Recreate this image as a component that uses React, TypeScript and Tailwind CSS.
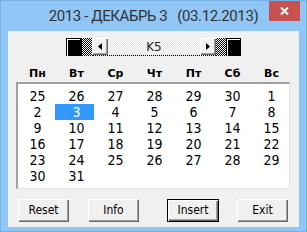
import React from 'react';

const days = ['Пн', 'Вт', 'Ср', 'Чт', 'Пт', 'Сб', 'Вс'];

const weeks = [
  ['25', '26', '27', '28', '29', '30', '1'],
  ['2', '3', '4', '5', '6', '7', '8'],
  ['9', '10', '11', '12', '13', '14', '15'],
  ['16', '17', '18', '19', '20', '21', '22'],
  ['23', '24', '25', '26', '27', '28', '29'],
  ['30', '31', '', '', '', '', ''],
];

function ArrowButton({ dir }: { dir: 'left' | 'right' }) {
  return (
    <div className="w-[16px] h-[17px] bg-[#f0f0f0] flex items-center justify-center shadow-[inset_1px_1px_0_#fff,inset_-1px_-1px_0_#696969,inset_-2px_-2px_0_#a0a0a0]">
      <svg width="4" height="7" viewBox="0 0 4 7">
        {dir === 'left' ? <polygon points="4,0 4,7 0,3.5" fill="#000" /> : <polygon points="0,0 0,7 4,3.5" fill="#000" />}
      </svg>
    </div>
  );
}

function WinButton({ label, focused }: { label: string; focused?: boolean }) {
  return (
    <button
      className={
        'h-[23px] bg-[#f0f0f0] text-[12px] text-black font-["DejaVu_Sans_Condensed",sans-serif] shadow-[inset_1px_1px_0_#fff,inset_-1px_-1px_0_#696969,inset_-2px_-2px_0_#a0a0a0] ' +
        (focused ? 'w-[52px] border border-black' : 'w-[51px]')
      }
    >
      {label}
    </button>
  );
}

export default function App() {
  return (
    <div className="relative w-[307px] h-[232px] bg-[#8fc6f5] border border-[#78b0e2] flex flex-col font-['DejaVu_Sans',sans-serif]">
      <div className="h-[30px] flex items-center justify-center text-[15px] tracking-[-0.4px] text-[#333] font-['Roboto',sans-serif] whitespace-pre pt-[1px]">
        2013 - ДЕКАБРЬ 3   (03.12.2013)
      </div>
      <div className="absolute top-0 right-[6px] w-[31px] h-[20px] bg-[#c75050] flex items-center justify-center">
        <svg width="9" height="8" viewBox="0 0 9 8">
          <path d="M1 0.5 L8 7.5 M8 0.5 L1 7.5" stroke="#fff" strokeWidth="2" />
        </svg>
      </div>

      <div className="mx-[7px] h-[196px] bg-[#f0f0f0] flex flex-col">
        <div className="ml-[58px] mt-[7px] w-[175px] h-[18px] flex">
          <div className="w-[16px] h-[18px] bg-black pt-[1px] pl-[1px] pr-[2px]">
            <div className="w-full h-full border-t border-l border-white" />
          </div>
          <div className="w-[10px] h-[18px] bg-[image:repeating-conic-gradient(#000_0_25%,#fff_0_50%)] bg-[length:2px_2px]" />
          <div className="flex-1 flex flex-col border-b border-dotted border-black">
            <div className="h-[17px] flex">
              <ArrowButton dir="left" />
              <div className="flex-1 flex items-center justify-center text-[12px] text-[#222] bg-[image:repeating-conic-gradient(#e2e2e2_0_25%,#fff_0_50%)] bg-[length:2px_2px]">
                K5
              </div>
              <ArrowButton dir="right" />
            </div>
          </div>
          <div className="w-[10px] h-[18px] bg-[image:repeating-conic-gradient(#000_0_25%,#fff_0_50%)] bg-[length:2px_2px]" />
          <div className="w-[15px] h-[18px] bg-black pt-[1px] pl-[1px] pr-[1px]">
            <div className="w-full h-full border-t border-l border-white" />
          </div>
        </div>

        <div className="ml-[10px] mt-[10px] h-[16px] grid grid-cols-[repeat(7,39px)] items-center text-[11px] font-bold text-black">
          {days.map((d) => (
            <div key={d} className="text-center">
              {d}
            </div>
          ))}
        </div>

        <div className="ml-[8px] w-[274px] h-[107px] bg-white border-t-2 border-l-2 border-t-[#a0a0a0] border-l-[#a0a0a0] border-b border-r border-b-[#e3e3e3] border-r-[#e3e3e3] pt-[4px]">
          {weeks.map((w, i) => (
            <div key={i} className="h-[16px] grid grid-cols-[repeat(7,39px)] text-[14px] leading-[16px] text-black font-['DejaVu_Sans_Condensed',sans-serif]">
              {w.map((d, j) =>
                d === '3' && i === 1 ? (
                  <div key={j} className="-ml-[2px] w-[39px] bg-[#3399ff] text-white text-center pl-[4px]">
                    {d}
                  </div>
                ) : (
                  <div key={j} className="text-center">
                    {d}
                  </div>
                )
              )}
            </div>
          ))}
        </div>

        <div className="mt-[8px] flex items-start">
          <div className="ml-[10px]">
            <WinButton label="Reset" />
          </div>
          <div className="ml-[19px]">
            <WinButton label="Info" />
          </div>
          <div className="ml-[28px]">
            <WinButton label="Insert" focused />
          </div>
          <div className="ml-[18px]">
            <WinButton label="Exit" />
          </div>
        </div>
      </div>
    </div>
  );
}
